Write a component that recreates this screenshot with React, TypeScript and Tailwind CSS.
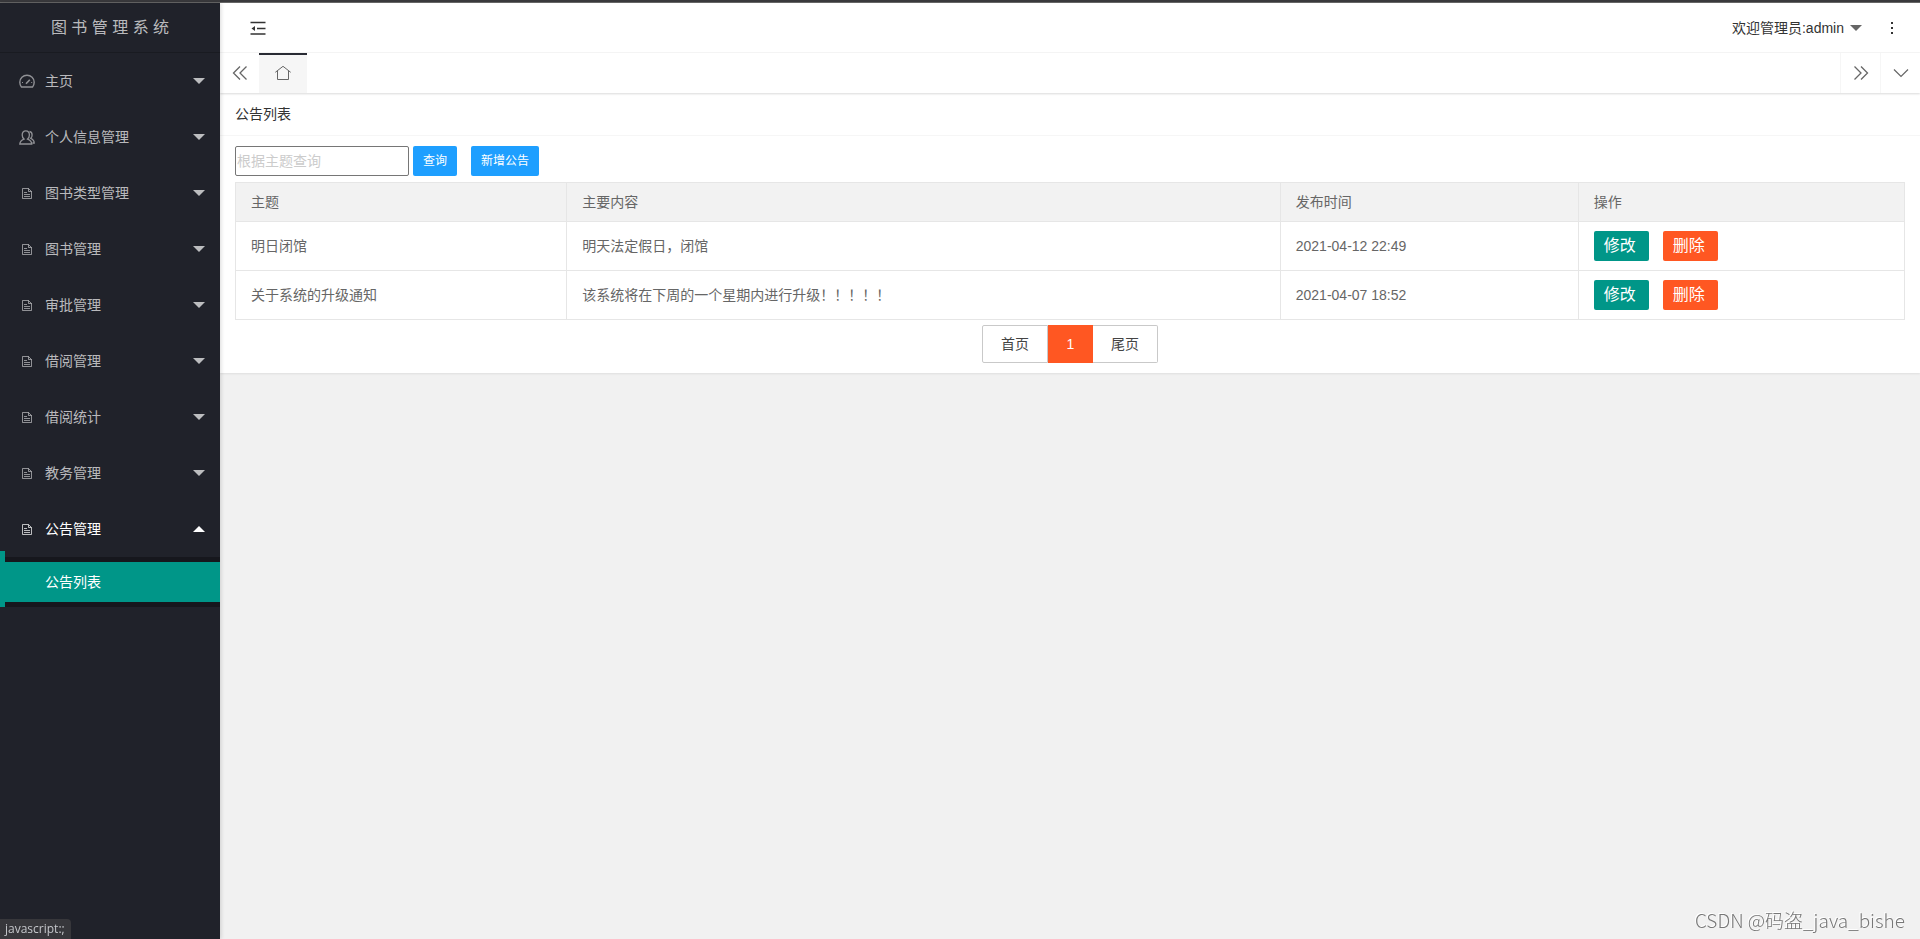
import React, { useState } from 'react';

interface IconProps {
  className?: string;
}

const GaugeIcon: React.FC<IconProps> = ({ className }) => (
  <svg className={className} viewBox="0 0 16 16" fill="none" stroke="currentColor" strokeWidth="1.4">
    <path d="M2.5 14h11c1-1.3 1.7-3 1.7-4.8a7.2 7 0 0 0-14.4 0c0 1.8.7 3.500 1.7 4.8Z" />
    <path d="M7 10.8 10.8 6.7" strokeWidth="1.6" />
    <path d="M3 9.500h1M12.2 9.500h1" strokeWidth="1" />
  </svg>
);

const UsersIcon: React.FC<IconProps> = ({ className }) => (
  <svg className={className} viewBox="0 0 16 16" fill="none" stroke="currentColor" strokeWidth="1.3">
    <path d="M.8 15c.2-2.8 1.700-4 4.200-4.900C3.800 9 3.200 7.700 3.200 6c0-2.600 1.300-4.200 3.600-4.200S10.400 3.400 10.400 6c0 1.700-.6 3-1.800 4.100 2.500.9 4 2.100 4.200 4.900Z" />
    <path d="M10.500 2.500c1.800.3 2.600 1.600 2.600 3.400 0 1.400-.4 2.500-1.300 3.400 2.100.9 3.400 2.200 3.400 4.700h-1.700" />
  </svg>
);

const FileIcon: React.FC<IconProps> = ({ className }) => (
  <svg className={className} viewBox="0 0 12 12" fill="none" stroke="currentColor" strokeWidth="1">
    <path d="M1.500 1.500h6l3 3v7h-9z" />
    <path d="M7.500 1.500v3h3M3 5.500h3M3 7.500h6M3 9.500h6" />
  </svg>
);

const HomeIcon: React.FC<IconProps> = ({ className }) => (
  <svg className={className} viewBox="0 0 16 16" fill="none" stroke="currentColor" strokeWidth="1">
    <path d="M.3 7.3 8 1.300l7.700 6" />
    <path d="M2.500 6v8.500h11V6" />
  </svg>
);

const ShrinkIcon: React.FC<IconProps> = ({ className }) => (
  <svg className={className} viewBox="0 0 16 14" fill="none" stroke="currentColor" strokeWidth="1.4">
    <path d="M.5 1.500h15M7 7.500h8.500M.5 13h15" />
    <path d="M5 5v5L1.500 7.500z" fill="currentColor" stroke="none" />
  </svg>
);

const DoubleLeftIcon: React.FC<IconProps> = ({ className }) => (
  <svg className={className} viewBox="0 0 16 16" fill="none" stroke="currentColor" strokeWidth="1.3">
    <path d="M8 1.500 1.500 8 8 14.500M14.500 1.500 8 8l6.500 6.500" />
  </svg>
);

const DownIcon: React.FC<IconProps> = ({ className }) => (
  <svg className={className} viewBox="0 0 16 16" fill="none" stroke="currentColor" strokeWidth="1.2">
    <path d="M1 4.500 8 11.500l7-7" />
  </svg>
);

const DotsIcon: React.FC<IconProps> = ({ className }) => (
  <svg className={className} viewBox="0 0 4 14" fill="currentColor">
    <path d="M1 1h2v2H1zM1 6h2v2H1zM1 11h2v2H1z" />
  </svg>
);

const Caret: React.FC<IconProps> = ({ className }) => (
  <svg className={className} viewBox="0 0 12 6" fill="currentColor">
    <path d="M0 0h12L6 6z" />
  </svg>
);

const menu = [
  { title: '主页', icon: GaugeIcon },
  { title: '个人信息管理', icon: UsersIcon },
  { title: '图书类型管理', icon: FileIcon },
  { title: '图书管理', icon: FileIcon },
  { title: '审批管理', icon: FileIcon },
  { title: '借阅管理', icon: FileIcon },
  { title: '借阅统计', icon: FileIcon },
  { title: '教务管理', icon: FileIcon },
  { title: '公告管理', icon: FileIcon, children: ['公告列表'] },
];

const notices = [
  { subject: '明日闭馆', content: '明天法定假日，闭馆', time: '2021-04-12 22:49' },
  { subject: '关于系统的升级通知', content: '该系统将在下周的一个星期内进行升级！！！！！', time: '2021-04-07 18:52' },
];

const Sidebar: React.FC = () => {
  const [open, setOpen] = useState('公告管理');

  return (
    <aside className="z-10 w-[220px] shrink-0 bg-[#20222A] text-white/70 shadow-[1px_0_4px_rgba(0,0,0,0.15)]">
      <div className="h-[50px] border-b border-black/20 text-center text-base leading-[50px]">图 书 管 理 系 统</div>
      <nav>
        <ul>
          {menu.map(({ title, icon: Icon, children }) => {
            const active = open === title;
            return (
              <li key={title}>
                <button
                  className={`flex h-14 w-full cursor-pointer items-center pr-[15px] pl-[19px] hover:text-white ${active ? 'text-white' : ''}`}
                  onClick={() => setOpen(active ? '' : title)}
                >
                  <span className={`mr-[10px] flex w-4 justify-center ${active ? 'text-white/70' : 'text-white/50'}`}>
                    <Icon className={Icon === FileIcon ? 'size-3' : 'size-4'} />
                  </span>
                  {title}
                  <Caret className={`ml-auto h-[6px] w-3 ${active ? 'rotate-180' : ''}`} />
                </button>
                {active && children && (
                  <ul className="relative bg-black/30 py-[5px]">
                    <li className="absolute -top-[6px] bottom-0 left-0 w-[5px] bg-[#009688]" aria-hidden="true" />
                    {children.map((child) => (
                      <li key={child}>
                        <a href="#" className="block h-10 bg-[#009688] pl-[45px] leading-10 text-white">{child}</a>
                      </li>
                    ))}
                  </ul>
                )}
              </li>
            );
          })}
        </ul>
      </nav>
    </aside>
  );
};

const Header: React.FC = () => (
  <header className="flex h-[50px] items-center border-b border-[#f6f6f6] bg-white pr-[26px] pl-[30px] text-[#333]">
    <button title="侧边伸缩" className="cursor-pointer">
      <ShrinkIcon className="h-[14px] w-4" />
    </button>
    <button className="ml-auto flex cursor-pointer items-center gap-[6px]">
      欢迎管理员:admin
      <Caret className="h-[6px] w-3 text-[#666]" />
    </button>
    <button title="更多" className="ml-7 cursor-pointer">
      <DotsIcon className="h-[14px] w-1" />
    </button>
  </header>
);

const TabBar: React.FC = () => (
  <div className="relative flex h-10 bg-white text-[#666] shadow-[0_1px_2px_rgba(0,0,0,0.15)]">
    <button title="向左" className="flex w-[39px] cursor-pointer items-center justify-center">
      <DoubleLeftIcon className="size-4" />
    </button>
    <a href="#" title="主页" className="flex w-12 items-center justify-center bg-[#f6f6f6] shadow-[inset_0_2px_0_#292B34]">
      <HomeIcon className="size-4" />
    </a>
    <button title="向右" className="ml-auto flex w-10 cursor-pointer items-center justify-center border-l border-[#f6f6f6]">
      <DoubleLeftIcon className="size-4 rotate-180" />
    </button>
    <button title="页面操作" className="flex w-10 cursor-pointer items-center justify-center border-l border-[#f6f6f6]">
      <DownIcon className="size-4" />
    </button>
  </div>
);

const NoticeTable: React.FC = () => (
  <table className="mt-[6px] w-full table-fixed border-collapse text-left text-[#666]">
    <colgroup>
      <col className="w-[19.85%]" />
      <col className="w-[42.75%]" />
      <col className="w-[17.85%]" />
      <col />
    </colgroup>
    <thead>
      <tr className="h-[39px] bg-[#f2f2f2]">
        {['主题', '主要内容', '发布时间', '操作'].map((name) => (
          <th key={name} className="border border-[#e6e6e6] px-[15px] font-normal">{name}</th>
        ))}
      </tr>
    </thead>
    <tbody>
      {notices.map((notice) => (
        <tr key={notice.time} className="h-[49px]">
          <td className="border border-[#e6e6e6] px-[15px]">{notice.subject}</td>
          <td className="border border-[#e6e6e6] px-[15px]">{notice.content}</td>
          <td className="border border-[#e6e6e6] px-[15px]">{notice.time}</td>
          <td className="border border-[#e6e6e6] px-[15px]">
            <div className="flex gap-[14px] text-base text-white">
              <button className="h-[30px] cursor-pointer rounded-xs bg-[#009688] pr-[13px] pl-[10px]">修改</button>
              <button className="h-[30px] cursor-pointer rounded-xs bg-[#FF5722] pr-[13px] pl-[10px]">删除</button>
            </div>
          </td>
        </tr>
      ))}
    </tbody>
  </table>
);

const Pagination: React.FC = () => (
  <nav className="mt-[5px] flex h-[38px] justify-center text-[#444]">
    <button className="cursor-pointer rounded-l-xs border border-[#c9c9c9] px-[18px]">首页</button>
    <button className="w-[45px] cursor-pointer bg-[#FF5722] text-white">1</button>
    <button className="cursor-pointer rounded-r-xs border border-l-0 border-[#c9c9c9] px-[18px]">尾页</button>
  </nav>
);

export default function App() {
  const [keyword, setKeyword] = useState('');

  return (
    <div className="flex min-h-screen flex-col bg-[#f1f1f1] font-['Liberation_Sans','Noto_Sans_CJK_SC',sans-serif] text-sm">
      <div className="h-[3px] border-b border-[#666] bg-[#39393c]" />
      <div className="flex flex-1">
        <Sidebar />
        <div className="min-w-0 flex-1">
          <Header />
          <TabBar />
          <main className="bg-white shadow-[0_1px_2px_rgba(0,0,0,0.08)]">
            <h1 className="h-[43px] border-b border-[#f6f6f6] px-[15px] leading-[42px] text-[#333]">公告列表</h1>
            <div className="px-[15px] py-[10px]">
              <div className="flex items-center text-xs text-white">
                <input
                  type="text"
                  aria-label="根据主题查询"
                  placeholder="根据主题查询"
                  className="h-[30px] w-[174px] rounded-xs border border-[#767676] px-px text-sm text-[#333] placeholder:text-[#ccc]"
                  value={keyword}
                  onChange={(e) => setKeyword(e.target.value)}
                />
                <button className="ml-1 h-[30px] cursor-pointer rounded-xs bg-[#1E9FFF] px-[10px]">查询</button>
                <button className="ml-[14px] h-[30px] cursor-pointer rounded-xs bg-[#1E9FFF] px-[10px]">新增公告</button>
              </div>
              <NoticeTable />
              <Pagination />
            </div>
          </main>
        </div>
      </div>
      <div className="fixed bottom-0 left-0 z-20 h-5 rounded-tr-sm bg-[#37373b] pr-[6px] pl-[5px] font-['Open_Sans',sans-serif] text-xs leading-5 text-[#c4c6ca]">
        javascript:;
      </div>
      <div className="fixed right-[15px] bottom-[5px] font-['Noto_Sans_CJK_SC',sans-serif] text-[19px] leading-7 font-light text-[#777] [text-shadow:-1px_-1px_0_#fff]">
        CSDN @码盗_java_bishe
      </div>
    </div>
  );
}
